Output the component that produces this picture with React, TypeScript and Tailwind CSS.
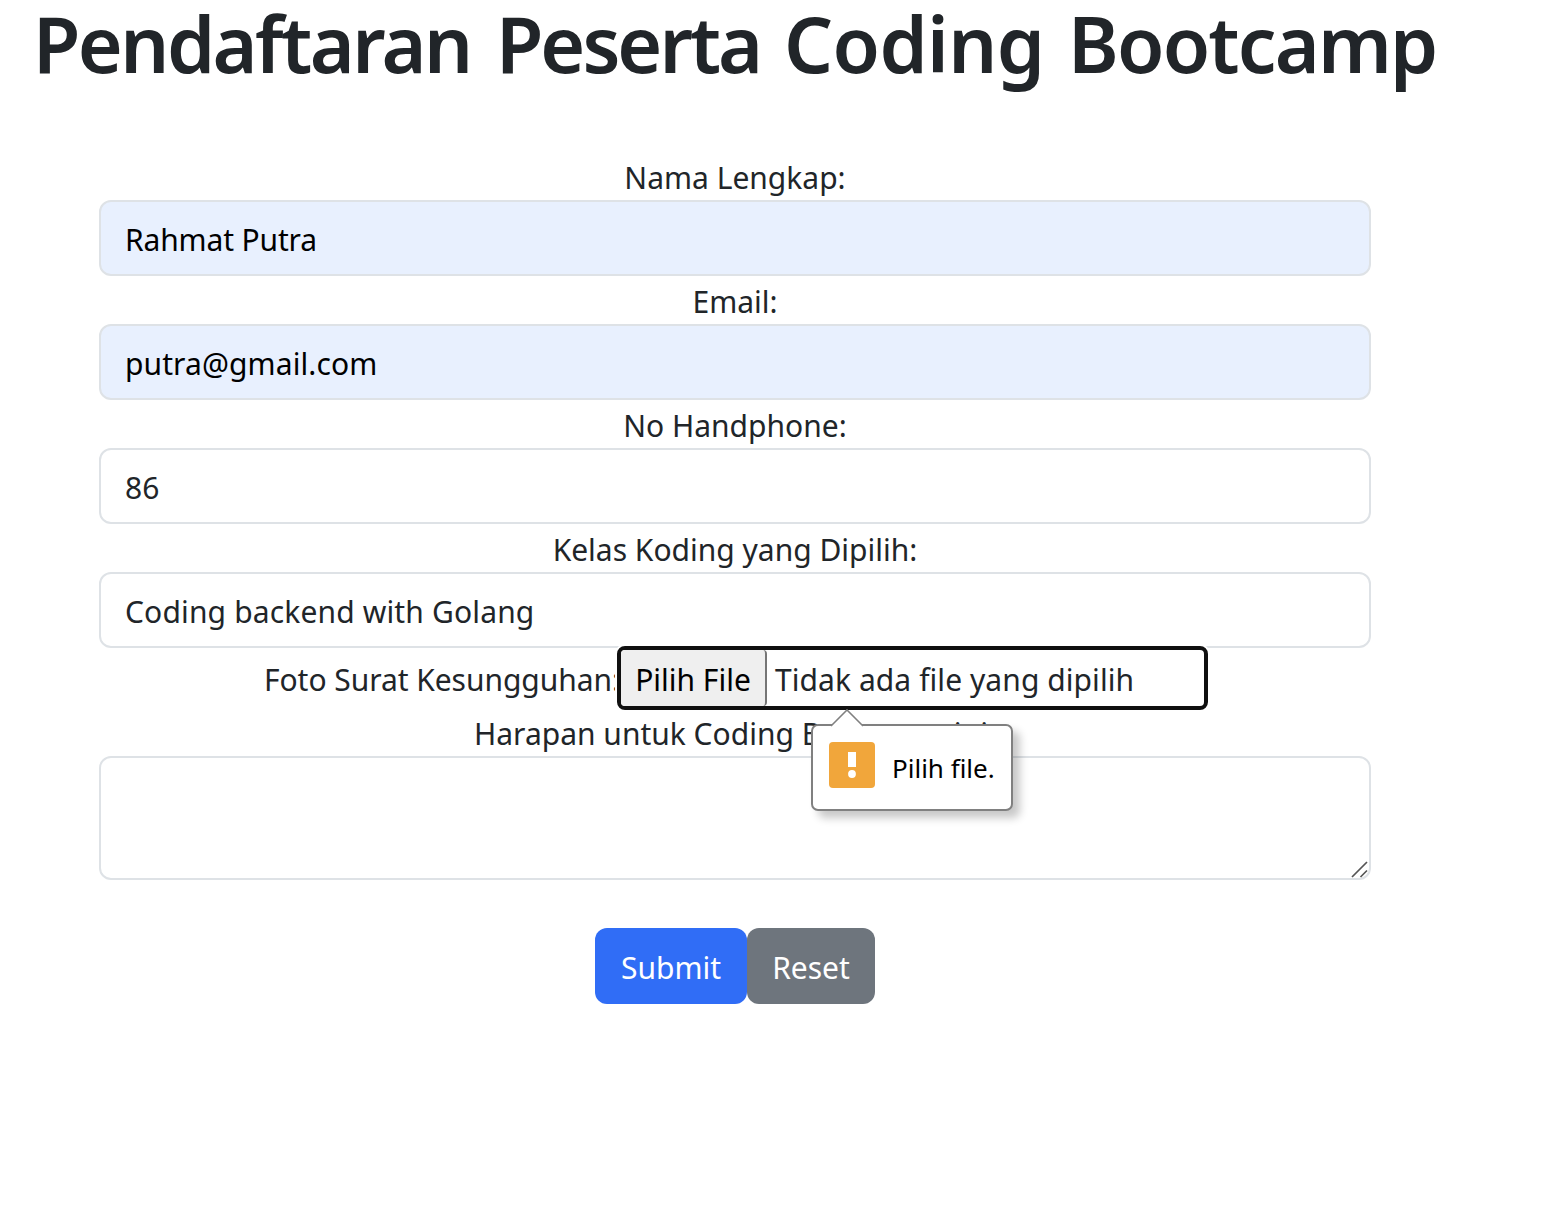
import React from "react";

const label = "flex h-12 items-center justify-center whitespace-nowrap pt-1";
const input =
  "block h-[76px] w-full rounded-[12px] border-2 border-[#dee2e6] px-6 pt-0.5 outline-none";

function Tooltip() {
  return (
    <div className="absolute left-[190px] top-[74px] z-10 flex h-[87px] w-[202px] items-center rounded-[7px] border-2 border-[#808080] bg-white pl-4 text-black shadow-[7px_7px_8px_rgba(0,0,0,0.22)]">
      <svg className="absolute -top-[17px] left-[17px]" width="34" height="18" viewBox="0 0 34 18">
        <path d="M1 17L17 1L33 17V18H1Z" fill="#fff" />
        <path d="M1 17L17 1L33 17" fill="none" stroke="#808080" strokeWidth="1.6" />
      </svg>
      <svg className="-mt-[5px]" width="46" height="46" viewBox="0 0 46 46">
        <rect width="46" height="46" rx="4" fill="#f1a63b" />
        <rect x="19" y="10" width="8" height="15" fill="#fff" />
        <circle cx="23" cy="32" r="3.9" fill="#fff" />
      </svg>
      <span className="ml-[17px] whitespace-nowrap text-[26px]">Pilih file.</span>
    </div>
  );
}

export default function App() {
  return (
    <main className="h-[1212px] bg-white font-['Noto_Sans',sans-serif] text-[30px] leading-[44px] text-[#212529]">
      <h1 className="h-[96px] whitespace-nowrap pl-[33px] text-[77px] font-semibold leading-[88px]">
        <span className="inline-block w-[463px] tracking-[-2.55px]">Pendaftaran </span>
        <span className="inline-block w-[288px] tracking-[-3px]">Peserta </span>
        <span className="inline-block w-[284px] tracking-[-0.6px]">Coding </span>
        <span className="inline-block tracking-[-1.8px]">Bootcamp</span>
      </h1>
      <form className="ml-[99px] mt-14 w-[1272px]">
        <label className={label}>Nama Lengkap:</label>
        <input className={`${input} bg-[#e8f0fe] tracking-[-0.15px] text-black`} defaultValue="Rahmat Putra" />
        <label className={label}>Email:</label>
        <input className={`${input} bg-[#e8f0fe] tracking-[0.1px] text-black`} defaultValue="putra@gmail.com" />
        <label className={label}>No Handphone:</label>
        <input className={input} defaultValue="86" />
        <label className={label}>Kelas Koding yang Dipilih:</label>
        <input className={`${input} tracking-[0.15px]`} defaultValue="Coding backend with Golang" />
        <div className="flex h-[60px] items-center justify-center">
          <label className="w-[355px] whitespace-nowrap pt-1 tracking-[-0.05px]">Foto Surat Kesungguhan:</label>
          <div className="relative -m-0.5 flex h-16 w-[591px] items-center rounded-[8px] border-4 border-[#101010] bg-white shadow-[0_0_0_2px_white]">
            <button
              type="button"
              className="h-full w-[146px] whitespace-nowrap rounded-[4px] border-r-2 border-[#767676] bg-[#efefef] pt-1 text-black"
            >
              Pilih File
            </button>
            <span className="ml-[8px] whitespace-nowrap pt-1 tracking-[0.07px]">Tidak ada file yang dipilih</span>
            <Tooltip />
          </div>
        </div>
        <label className={label}>Harapan untuk Coding Bootcamp ini:</label>
        <div className="relative">
          <textarea className="block h-[124px] w-full resize-none rounded-[12px] border-2 border-[#dee2e6] px-6 py-3 outline-none" />
          <svg className="absolute bottom-[2px] right-[2px]" width="18" height="18" viewBox="0 0 18 18">
            <path d="M1 17L16 2M9.5 17L16 10.5" stroke="#555" strokeWidth="1.7" />
          </svg>
        </div>
        <div className="mt-12 flex justify-center">
          <button type="button" className="h-[76px] w-[152px] rounded-[12px] bg-[#306df6] pt-1 text-white">
            Submit
          </button>
          <button type="button" className="h-[76px] w-32 rounded-[12px] bg-[#6e757d] pt-1 text-white">
            Reset
          </button>
        </div>
      </form>
    </main>
  );
}
